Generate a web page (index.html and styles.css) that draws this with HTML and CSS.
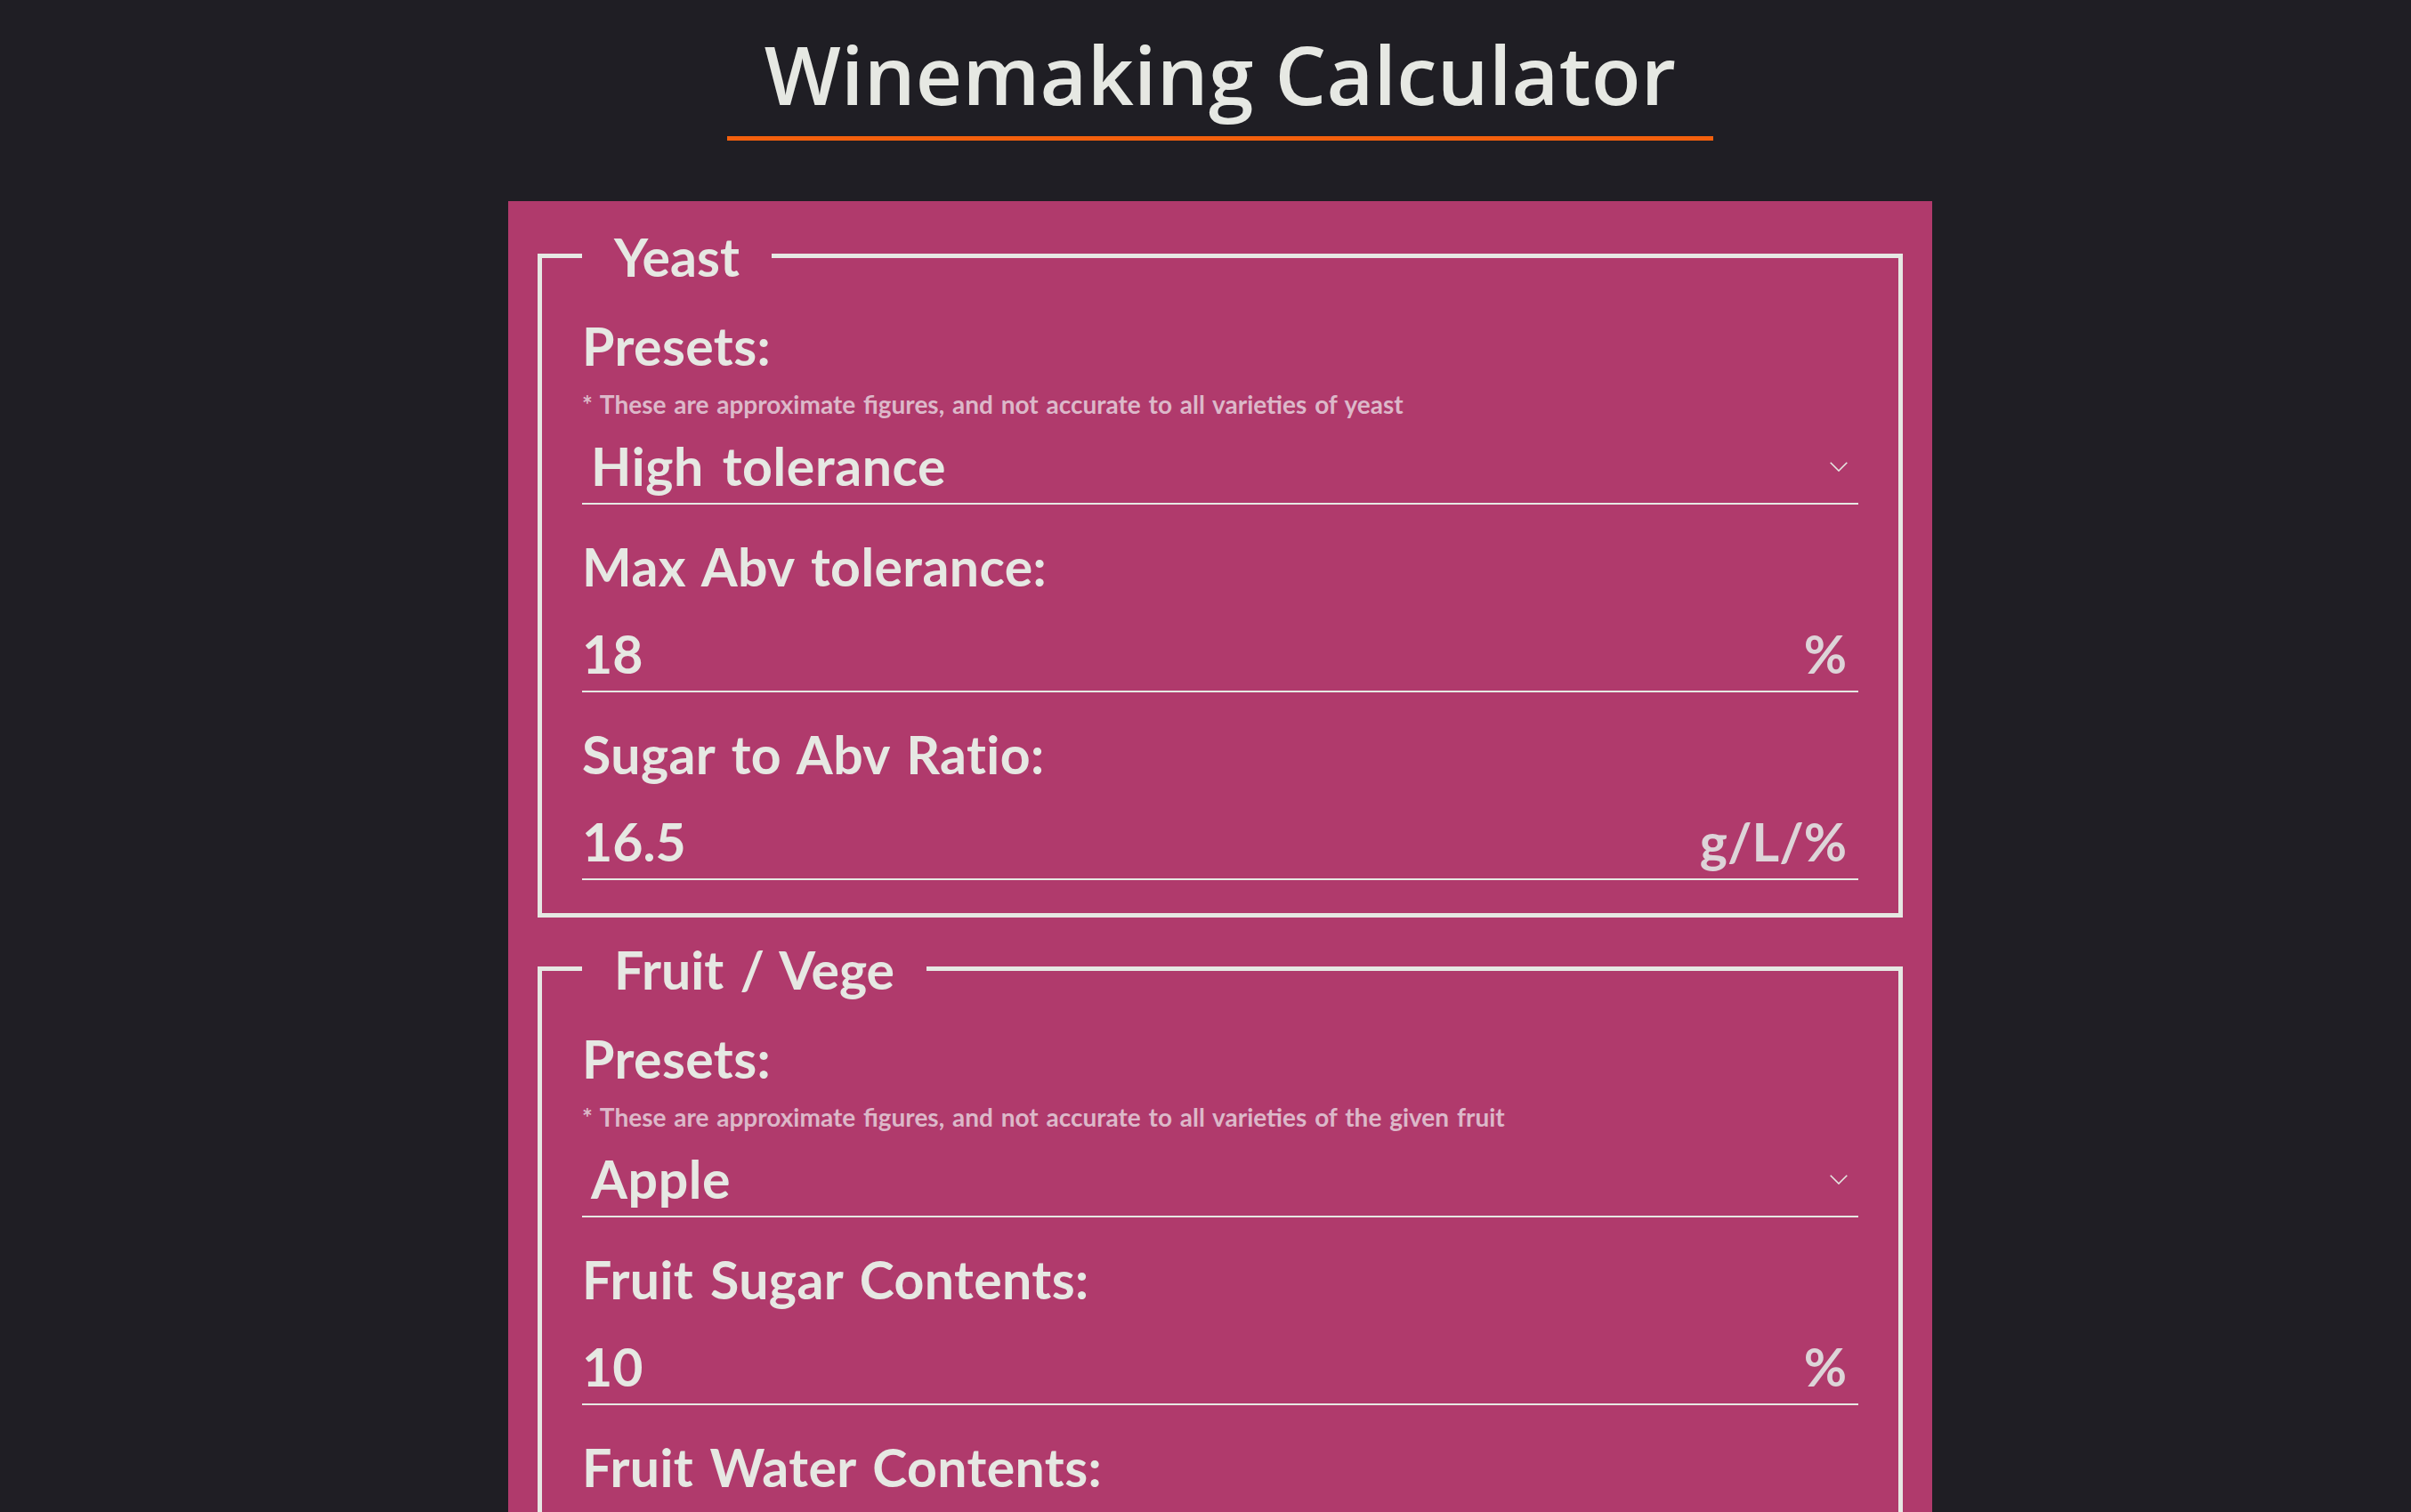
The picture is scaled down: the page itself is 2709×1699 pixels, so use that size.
FILE: index.html
```html
<!DOCTYPE html>
<html lang="en">
<head>
<meta charset="utf-8">
<title>Winemaking Calculator</title>
<link rel="stylesheet" href="styles.css">
</head>
<body>
<header class="header">
  <h1 class="title">Winemaking Calculator</h1>
</header>
<main class="card">
  <fieldset class="group">
    <legend class="group-title">Yeast</legend>
    <div class="field">
      <label class="field-label">Presets:</label>
      <p class="field-note">* These are approximate figures, and not accurate to all varieties of yeast</p>
      <div class="select">
        <span class="select-value">High tolerance</span>
        <svg class="chevron" viewBox="0 0 20 11" width="20" height="11"><path d="M0.7 0.7 L10 10 L19.3 0.7" fill="none" stroke="currentColor" stroke-width="1.6"/></svg>
      </div>
    </div>
    <div class="field">
      <label class="field-label">Max Abv tolerance:</label>
      <div class="input"><span class="input-value">18</span><span class="unit">%</span></div>
    </div>
    <div class="field">
      <label class="field-label">Sugar to Abv Ratio:</label>
      <div class="input"><span class="input-value">16.5</span><span class="unit">g/L/%</span></div>
    </div>
  </fieldset>
  <fieldset class="group">
    <legend class="group-title">Fruit / Vege</legend>
    <div class="field">
      <label class="field-label">Presets:</label>
      <p class="field-note">* These are approximate figures, and not accurate to all varieties of the given fruit</p>
      <div class="select">
        <span class="select-value">Apple</span>
        <svg class="chevron" viewBox="0 0 20 11" width="20" height="11"><path d="M0.7 0.7 L10 10 L19.3 0.7" fill="none" stroke="currentColor" stroke-width="1.6"/></svg>
      </div>
    </div>
    <div class="field">
      <label class="field-label">Fruit Sugar Contents:</label>
      <div class="input"><span class="input-value">10</span><span class="unit">%</span></div>
    </div>
    <div class="field">
      <label class="field-label">Fruit Water Contents:</label>
      <div class="input"><span class="input-value">84</span><span class="unit">%</span></div>
    </div>
  </fieldset>
</main>
</body>
</html>
```
FILE: styles.css
```css
html, body {
  margin: 0;
  background: #1f1e24;
}
body {
  padding-left: 33px;
  color: #e6e8e3;
  font-family: "Lato", "Open Sans", sans-serif;
}
.header {
  display: flex;
  justify-content: center;
  padding-top: 33px;
}
.title {
  margin: 0;
  width: 1108px;
  box-sizing: border-box;
  text-align: center;
  font-family: "Open Sans", "Noto Sans", sans-serif;
  font-size: 91px;
  font-weight: 600;
  line-height: 100px;
  letter-spacing: 0.3px;
  padding: 0 0 20px;
  border-bottom: 5px solid #f3600d;
}
.card {
  width: 1600px;
  box-sizing: border-box;
  margin: 68px auto 0;
  background: #b03a6c;
  padding: 24px 33px 60px;
}
.group {
  margin: 0;
  min-inline-size: 0;
  border: 5px solid #e6e8e3;
  padding: 30px 45px 37px;
}
.group + .group {
  margin-top: 20px;
}
.group-title {
  padding: 4px 36px 0;
  font-size: 59px;
  line-height: 70px;
  font-weight: 700;
  word-spacing: 4px;
}
.field + .field {
  margin-top: 35px;
}
.field-label {
  display: block;
  font-size: 59px;
  line-height: 70px;
  font-weight: 700;
  letter-spacing: 0.4px;
  word-spacing: 4px;
}
.field-note {
  margin: 10px 0 0;
  font-size: 28px;
  line-height: 40px;
  font-weight: 700;
  word-spacing: 2px;
  color: #dcb8c9;
}
.select {
  margin-top: 15px;
  display: flex;
  align-items: center;
  justify-content: space-between;
  padding: 0 12px 6px 10px;
  border-bottom: 2px solid #e6e8e3;
  font-size: 59px;
  line-height: 70px;
  font-weight: 700;
  letter-spacing: 0.6px;
  word-spacing: 6px;
}
.chevron {
  display: block;
  color: #e6e8e3;
}
.input {
  margin-top: 28px;
  display: flex;
  justify-content: space-between;
  padding: 0 13px 6px 0;
  border-bottom: 2px solid #e6e8e3;
  font-size: 59px;
  line-height: 70px;
  font-weight: 700;
}
.unit {
  color: #ddd4d8;
}
```
